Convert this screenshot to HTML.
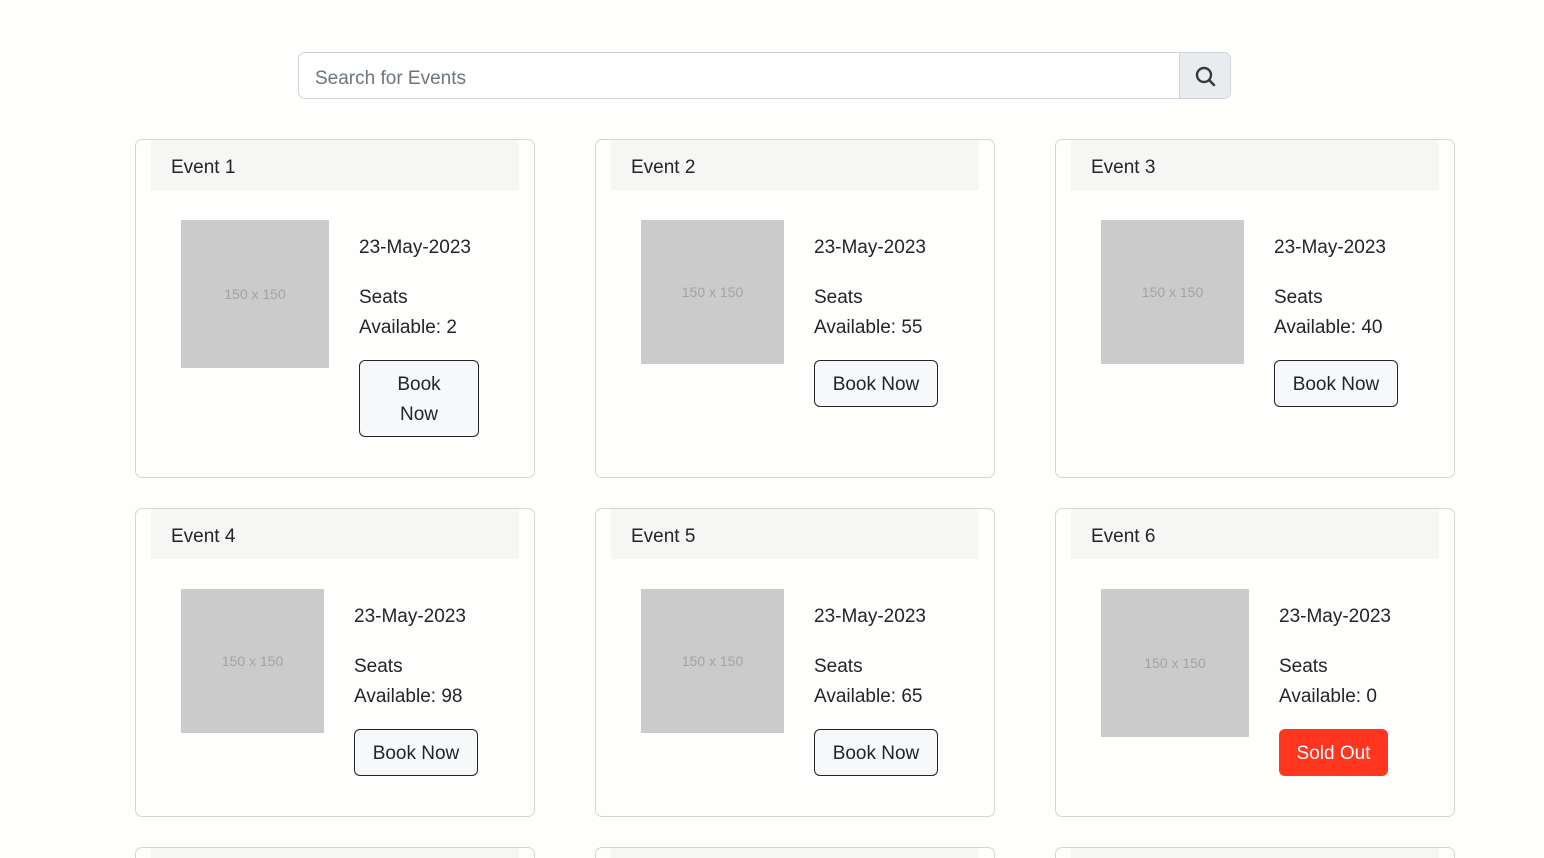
<!DOCTYPE html>
<html><head><meta charset="utf-8"><style>
*{box-sizing:border-box;margin:0;padding:0}
html{width:1544px;height:858px;overflow:hidden}
body{width:1544px;height:858px;overflow:hidden;background:#fefefd;font-family:"Liberation Sans",sans-serif;color:#212529;position:relative}
.a{position:absolute}
.search{left:298px;top:52px;width:933px;height:47px;border:1px solid #ced4da;border-radius:7px;overflow:hidden;background:#fff}
.search span{position:absolute;left:16px;top:15px;font-size:19px;color:#6c757d}
.sbtn{position:absolute;right:0;top:0;width:51px;height:100%;background:#e9ecef;border-left:1px solid #ced4da}
.card{border:1px solid #d5d5d3;border-radius:7px;width:400px;background:#fefefd}
.hdr{background:#f6f7f4;height:50px;font-size:19px;padding:17px 20px 0}
.img{background:#cbcbcb;color:#a3a3a3;font-size:14px;display:flex;align-items:center;justify-content:center}
.t{font-size:19px;white-space:nowrap;margin-top:2px}
.btn{border:1px solid #212529;border-radius:6px;background:#f8f9fa;font-size:19px;display:flex;align-items:center;justify-content:center;text-align:center;line-height:30px;padding-top:3px}
.sold{background:#ff3520;color:#fff;border-radius:6px;font-size:19px;display:flex;align-items:center;justify-content:center;padding-top:3px}
</style></head><body>
<div class="a search"><span>Search for Events</span><div class="sbtn"><svg width="51" height="47" viewBox="0 0 51 47"><circle cx="24" cy="22" r="7" fill="none" stroke="#343a40" stroke-width="2.4"/><line x1="29" y1="27" x2="34" y2="32" stroke="#343a40" stroke-width="2.6" stroke-linecap="round"/></svg></div></div>

<div class="a card" style="left:135px;top:139px;height:339px"></div>
<div class="a card" style="left:595px;top:139px;height:339px"></div>
<div class="a card" style="left:1055px;top:139px;height:339px"></div>
<div class="a card" style="left:135px;top:508px;height:309px"></div>
<div class="a card" style="left:595px;top:508px;height:309px"></div>
<div class="a card" style="left:1055px;top:508px;height:309px"></div>
<div class="a card" style="left:135px;top:847px;height:11px;border-bottom:none;border-radius:7px 7px 0 0"></div>
<div class="a card" style="left:595px;top:847px;height:11px;border-bottom:none;border-radius:7px 7px 0 0"></div>
<div class="a card" style="left:1055px;top:847px;height:11px;border-bottom:none;border-radius:7px 7px 0 0"></div>

<div class="a hdr" style="left:151px;top:140px;width:368px">Event 1</div>
<div class="a hdr" style="left:611px;top:140px;width:368px">Event 2</div>
<div class="a hdr" style="left:1071px;top:140px;width:368px">Event 3</div>
<div class="a hdr" style="left:151px;top:509px;width:368px">Event 4</div>
<div class="a hdr" style="left:611px;top:509px;width:368px">Event 5</div>
<div class="a hdr" style="left:1071px;top:509px;width:368px">Event 6</div>
<div class="a hdr" style="left:151px;top:848px;width:368px;height:10px;padding:0"></div>
<div class="a hdr" style="left:611px;top:848px;width:368px;height:10px;padding:0"></div>
<div class="a hdr" style="left:1071px;top:848px;width:368px;height:10px;padding:0"></div>

<div class="a img" style="left:181px;top:220px;width:148px;height:148px">150 x 150</div>
<div class="a t" style="left:359px;top:235px">23-May-2023</div>
<div class="a t" style="left:359px;top:285px">Seats</div>
<div class="a t" style="left:359px;top:315px">Available: 2</div>
<div class="a btn" style="left:359px;top:360px;width:120px;height:77px">Book<br>Now</div>

<div class="a img" style="left:641px;top:220px;width:143px;height:144px">150 x 150</div>
<div class="a t" style="left:814px;top:235px">23-May-2023</div>
<div class="a t" style="left:814px;top:285px">Seats</div>
<div class="a t" style="left:814px;top:315px">Available: 55</div>
<div class="a btn" style="left:814px;top:360px;width:124px;height:47px">Book Now</div>

<div class="a img" style="left:1101px;top:220px;width:143px;height:144px">150 x 150</div>
<div class="a t" style="left:1274px;top:235px">23-May-2023</div>
<div class="a t" style="left:1274px;top:285px">Seats</div>
<div class="a t" style="left:1274px;top:315px">Available: 40</div>
<div class="a btn" style="left:1274px;top:360px;width:124px;height:47px">Book Now</div>

<div class="a img" style="left:181px;top:589px;width:143px;height:144px">150 x 150</div>
<div class="a t" style="left:354px;top:604px">23-May-2023</div>
<div class="a t" style="left:354px;top:654px">Seats</div>
<div class="a t" style="left:354px;top:684px">Available: 98</div>
<div class="a btn" style="left:354px;top:729px;width:124px;height:47px">Book Now</div>

<div class="a img" style="left:641px;top:589px;width:143px;height:144px">150 x 150</div>
<div class="a t" style="left:814px;top:604px">23-May-2023</div>
<div class="a t" style="left:814px;top:654px">Seats</div>
<div class="a t" style="left:814px;top:684px">Available: 65</div>
<div class="a btn" style="left:814px;top:729px;width:124px;height:47px">Book Now</div>

<div class="a img" style="left:1101px;top:589px;width:148px;height:148px">150 x 150</div>
<div class="a t" style="left:1279px;top:604px">23-May-2023</div>
<div class="a t" style="left:1279px;top:654px">Seats</div>
<div class="a t" style="left:1279px;top:684px">Available: 0</div>
<div class="a sold" style="left:1279px;top:729px;width:109px;height:47px">Sold Out</div>
</body></html>
